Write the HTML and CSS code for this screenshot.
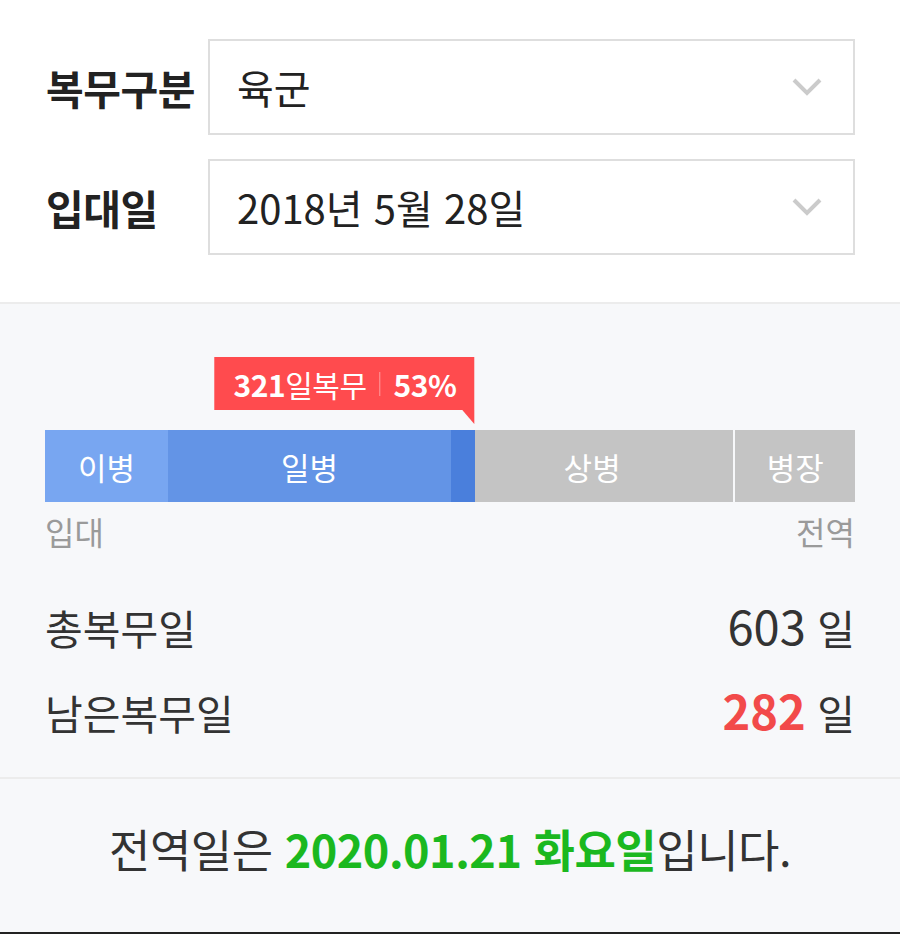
FILE: index.html
```html
<!DOCTYPE html>
<html lang="ko">

<head>
  <meta charset="UTF-8">
  <meta name="viewport" content="width=device-width, initial-scale=1.0">
  <title>전역일 계산기</title>
  <link rel="stylesheet" href="styles.css">
</head>

<body>

  <section class="form">
    <div class="row">
      <span class="label">복무구분</span>
      <div class="select">
        <span>육군</span>
        <svg class="chevron" width="32" height="20" viewBox="0 0 32 20"><path d="M3 3 L16 16 L29 3" fill="none" stroke="#cbcbcb" stroke-width="4"/></svg>
      </div>
    </div>
    <div class="row">
      <span class="label">입대일</span>
      <div class="select">
        <span>2018년 5월 28일</span>
        <svg class="chevron" width="32" height="20" viewBox="0 0 32 20"><path d="M3 3 L16 16 L29 3" fill="none" stroke="#cbcbcb" stroke-width="4"/></svg>
      </div>
    </div>
  </section>

  <section class="status">
    <div class="progress">
      <div class="tip" style="left: 53%">
        <b>321</b>일복무<i class="divider"></i><b>53%</b>
      </div>
      <div class="bar">
        <div class="seg" style="width: 15.2%; --fill: 100%; --color: #78a6f1">이병</div>
        <div class="seg" style="width: 34.9%; --fill: 100%; --color: #6394e6">일병</div>
        <div class="seg" style="width: 34.9%; --fill: 8.5%; --color: #4a7fdc">상병</div>
        <div class="seg last" style="width: 15%; --fill: 0%; --color: #4a7fdc">병장</div>
      </div>
    </div>
    <div class="ends">
      <span>입대</span>
      <span>전역</span>
    </div>
    <ul class="stats">
      <li><span>총복무일</span><span><b class="num">603</b> 일</span></li>
      <li><span>남은복무일</span><span><b class="num red">282</b> 일</span></li>
    </ul>
  </section>

  <footer class="result">
    <p>전역일은 <strong>2020.01.21 화요일</strong>입니다.</p>
  </footer>

</body>

</html>
```

FILE: styles.css
```css
html, body {
  height: 100%;
}
body {
  font-family: "Noto Sans CJK KR", "Noto Sans", sans-serif;
  color: #333;
  margin: 0;
  padding: 0;
  background-color: #fff;
  display: flex;
  flex-direction: column;
}
.form {
  padding: 39px 45px 47px 46px;
  display: flex;
  flex-direction: column;
  gap: 24px;
}
.row {
  display: flex;
  align-items: center;
}
.label {
  width: 162px;
  font-size: 41px;
  font-weight: 700;
  color: #222;
  letter-spacing: -0.5px;
}
.select {
  flex: 1;
  height: 96px;
  box-sizing: border-box;
  border: 2px solid #dedede;
  display: flex;
  align-items: center;
  justify-content: space-between;
  padding: 0 30px 0 27px;
  font-size: 40px;
  color: #222;
}
.chevron {
  display: block;
}
.status {
  background-color: #f7f8fa;
  border-top: 2px solid #ececec;
  border-bottom: 2px solid #ececec;
  padding: 53px 45px 25px 45px;
}
.progress {
  position: relative;
  padding-top: 73px;
}
.tip {
  position: absolute;
  top: 0;
  transform: translateX(-100%);
  height: 53px;
  padding: 0 18px 0 19px;
  background-color: #ff4b4e;
  color: #fff;
  font-size: 30px;
  display: flex;
  align-items: center;
  white-space: nowrap;
  letter-spacing: -0.5px;
}
.tip b {
  font-weight: 700;
}
.tip::after {
  content: "";
  position: absolute;
  right: 0;
  top: 100%;
  border-top: 14px solid #ff4b4e;
  border-left: 12px solid transparent;
}
.divider {
  display: inline-block;
  width: 1px;
  height: 24px;
  background-color: rgba(255, 255, 255, 0.45);
  margin: 0 13px;
}
.bar {
  display: flex;
  height: 72px;
}
.seg {
  display: flex;
  align-items: center;
  justify-content: center;
  color: #fff;
  font-size: 31px;
  background: linear-gradient(to right, var(--color) var(--fill), #c4c4c4 var(--fill));
}
.seg.last {
  margin-left: 2px;
  flex: 1;
}
.ends {
  display: flex;
  justify-content: space-between;
  font-size: 32px;
  color: #9a9a9a;
  line-height: 42px;
  margin-top: 8px;
}
.stats {
  list-style: none;
  padding: 0;
  margin: 30px 0 0 0;
  font-size: 41px;
  color: #333;
}
.stats li {
  display: flex;
  justify-content: space-between;
  align-items: baseline;
  height: 85px;
  line-height: 85px;
}
.num {
  font-weight: 400;
  font-size: 47px;
}
.num.red {
  color: #f24a4a;
  font-weight: 700;
}
.result {
  flex: 1;
  background-color: #f7f8fa;
  border-bottom: 2px solid #222;
  display: flex;
  align-items: center;
  justify-content: center;
  padding-bottom: 14px;
}
.result p {
  margin: 0;
  font-size: 45px;
  color: #333;
  letter-spacing: -0.5px;
}
.result strong {
  color: #1bb81f;
  font-weight: 700;
}
```
